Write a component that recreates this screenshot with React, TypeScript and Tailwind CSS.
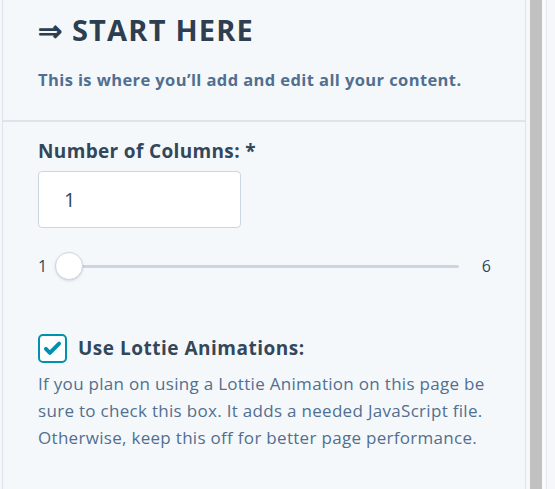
import React from 'react';

const font = { fontFamily: '"Open Sans", Lato, sans-serif' };

const Slider: React.FC<{ min: number; max: number; value: number }> = ({ min, max, value }) => {
    const pct = ((value - min) / (max - min)) * 100;
    return (
        <div className="flex items-center w-[453px] h-[28px]">
            <span className="text-[16px] text-[#33475b] w-[17px]">{min}</span>
            <div className="relative flex-1 h-[28px] flex items-center">
                <div className="w-full h-[3px] bg-[#cbd6e2] rounded-full" />
                <div
                    className="absolute top-0 w-[28px] h-[28px] rounded-full bg-white border border-[#cbd6e2] shadow-sm"
                    style={{ left: `calc(${pct}% - ${pct * 0.28}px)` }}
                />
            </div>
            <span className="text-[16px] text-[#33475b] w-[32px] text-right">{max}</span>
        </div>
    );
};

export default function App() {
    return (
        <div className="w-[555px] h-[489px] bg-[#f5f8fa] flex overflow-hidden" style={font}>
            <div className="ml-[2px] w-[524px] h-full border-x border-[#dfe3eb] flex flex-col">
                <div className="h-[122px] border-b-2 border-[#dfe3eb] pl-[35px] pt-[11px]">
                    <h1 className="text-[29px] font-bold text-[#2d3e50] tracking-[1.2px] leading-[38px]">⇒ START HERE</h1>
                    <p className="mt-[20px] text-[16.5px] font-bold text-[#516f90] tracking-[0.4px] leading-[22px]">
                        This is where you’ll add and edit all your content.
                    </p>
                </div>
                <div className="pl-[35px] pt-[16px]">
                    <label className="block text-[19px] font-bold text-[#33475b] tracking-[0.35px] leading-[26px]">
                        Number of Columns: *
                    </label>
                    <div className="mt-[7px] w-[203px] h-[57px] bg-white border border-[#cbd6e2] rounded-[4px] flex items-center pl-[25px] text-[20px] text-[#33475b]">
                        1
                    </div>
                    <div className="mt-[24px]">
                        <Slider min={1} max={6} value={1} />
                    </div>
                    <div className="mt-[54px] flex items-center gap-[11px]">
                        <div className="w-[29px] h-[29px] rounded-[5px] border-2 border-[#0091ae] bg-white flex items-center justify-center">
                            <svg viewBox="0 0 24 24" className="w-[21px] h-[21px]" fill="none" stroke="#0091ae" strokeWidth="4.5" strokeLinecap="round" strokeLinejoin="round">
                                <path d="M4.5 12.5l4.5 4.5L19.5 6.5" />
                            </svg>
                        </div>
                        <span className="text-[19px] font-bold text-[#33475b] tracking-[0.5px]">Use Lottie Animations:</span>
                    </div>
                    <p className="mt-[7px] w-[466px] text-[17px] tracking-[0.3px] leading-[27px] text-[#516f90]">
                        If you plan on using a Lottie Animation on this page be sure to check this box. It adds a needed JavaScript file. Otherwise, keep this off for better page performance.
                    </p>
                </div>
            </div>
            <div className="ml-[4px] w-[17px] h-full bg-[#fafafa] border-r border-[#e5e8ed] flex">
                <div className="w-[12px] h-full bg-[#c1c1c1]" />
            </div>
        </div>
    );
}
